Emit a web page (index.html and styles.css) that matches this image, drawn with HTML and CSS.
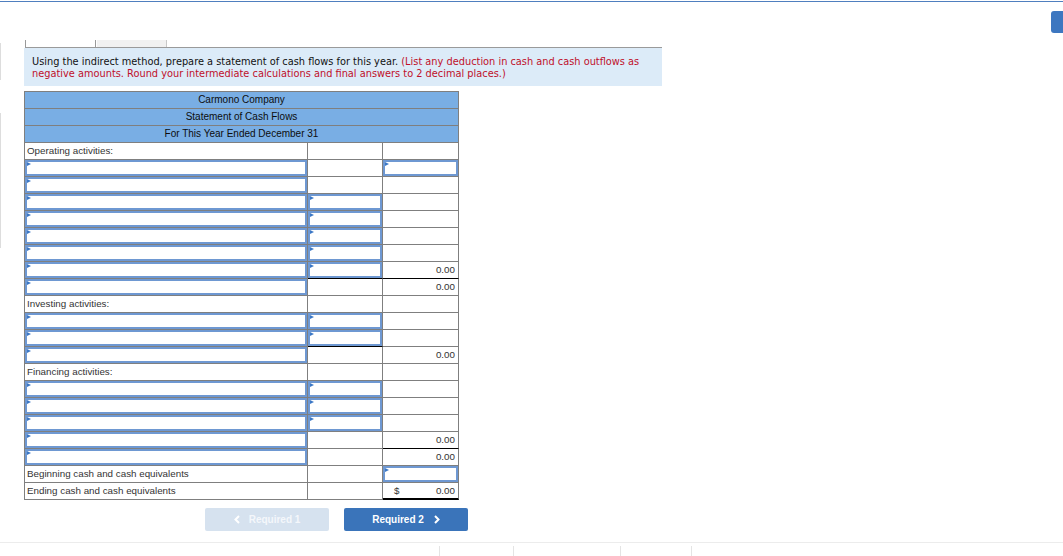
FILE: index.html
```html
<!DOCTYPE html>
<html lang="en">
<head>
<meta charset="utf-8">
<title>Statement of Cash Flows</title>
<link rel="stylesheet" href="styles.css">
</head>
<body>
<div class="topbar"></div>
<div class="side-tab"></div>
<div class="edge edge-a"></div>
<div class="edge edge-b"></div>
<main class="content">
  <div class="tabs"><div class="tab tab-1"></div><div class="tab tab-2"></div></div>
  <div class="instr">Using the indirect method, prepare a statement of cash flows for this year. <span class="red">(List any deduction in cash and cash outflows as<br>negative amounts. Round your intermediate calculations and final answers to 2 decimal places.)</span></div>

  <div class="stmt">
    <div class="cell head">Carmono Company</div>
    <div class="cell head">Statement of Cash Flows</div>
    <div class="cell head">For This Year Ended December 31</div>

    <div class="cell lbl">Operating activities:</div><div class="cell"></div><div class="cell"></div>
    <div class="cell"><div class="inp"></div></div><div class="cell"></div><div class="cell"><div class="inp"></div></div>
    <div class="cell"><div class="inp"></div></div><div class="cell"></div><div class="cell"></div>
    <div class="cell"><div class="inp"></div></div><div class="cell"><div class="inp"></div></div><div class="cell"></div>
    <div class="cell"><div class="inp"></div></div><div class="cell"><div class="inp"></div></div><div class="cell"></div>
    <div class="cell"><div class="inp"></div></div><div class="cell"><div class="inp"></div></div><div class="cell"></div>
    <div class="cell"><div class="inp"></div></div><div class="cell"><div class="inp"></div></div><div class="cell"></div>
    <div class="cell"><div class="inp"></div></div><div class="cell under"><div class="inp"></div></div><div class="cell num under">0.00</div>
    <div class="cell"><div class="inp"></div></div><div class="cell"></div><div class="cell num">0.00</div>

    <div class="cell lbl">Investing activities:</div><div class="cell"></div><div class="cell"></div>
    <div class="cell"><div class="inp"></div></div><div class="cell"><div class="inp"></div></div><div class="cell"></div>
    <div class="cell"><div class="inp"></div></div><div class="cell under"><div class="inp"></div></div><div class="cell"></div>
    <div class="cell"><div class="inp"></div></div><div class="cell"></div><div class="cell num">0.00</div>

    <div class="cell lbl">Financing activities:</div><div class="cell"></div><div class="cell"></div>
    <div class="cell"><div class="inp"></div></div><div class="cell"><div class="inp"></div></div><div class="cell"></div>
    <div class="cell"><div class="inp"></div></div><div class="cell"><div class="inp"></div></div><div class="cell"></div>
    <div class="cell"><div class="inp"></div></div><div class="cell"><div class="inp"></div></div><div class="cell"></div>
    <div class="cell"><div class="inp"></div></div><div class="cell"></div><div class="cell num under">0.00</div>
    <div class="cell"><div class="inp"></div></div><div class="cell"></div><div class="cell num">0.00</div>

    <div class="cell lbl">Beginning cash and cash equivalents</div><div class="cell"></div><div class="cell"><div class="inp"></div></div>
    <div class="cell lbl">Ending cash and cash equivalents</div><div class="cell"></div><div class="cell num total"><span class="cur">$</span>0.00</div>
  </div>

  <div class="nav">
    <div class="btn btn-off"><svg class="chev" width="6" height="9" viewBox="0 0 6 9"><polyline points="5,1 1.5,4.5 5,8" fill="none" stroke="#ffffff" stroke-width="2"/></svg><span>Required 1</span></div>
    <div class="btn btn-on"><span>Required 2</span><svg class="chev" width="6" height="9" viewBox="0 0 6 9"><polyline points="1,1 4.5,4.5 1,8" fill="none" stroke="#ffffff" stroke-width="2"/></svg></div>
  </div>
</main>
<footer class="footer">
  <div class="fcell f1"></div><div class="fcell f2"></div><div class="fcell f3"></div><div class="fcell f4"></div>
</footer>
</body>
</html>
```

FILE: styles.css
```css
html, body {
  margin: 0;
  padding: 0;
  background: #ffffff;
  overflow: hidden;
}
body {
  position: relative;
  width: 1063px;
  height: 556px;
  font-family: "Liberation Sans", Arial, sans-serif;
}
.topbar {
  height: 1px;
  margin-top: 1px;
  background: #4f7fbf;
}
.side-tab {
  position: absolute;
  right: 0;
  top: 11px;
  width: 12px;
  height: 22px;
  background: #3d77c0;
  border-radius: 3px 0 0 3px;
}
.edge {
  position: absolute;
  left: 0;
  width: 1px;
  background: #dddddd;
}
.edge-a { top: 43px; height: 37px; }
.edge-b { top: 113px; height: 135px; }

.content {
  margin-left: 24px;
  padding-top: 38px;
}
.tabs {
  display: flex;
  width: 637px;
  height: 7px;
  margin-left: 1px;
  border-bottom: 1px solid #9a9a9a;
}
.tab { height: 7px; box-sizing: border-box; }
.tab-1 { width: 70px; border-left: 1px solid #999999; }
.tab-2 {
  width: 72px;
  border-left: 1px solid #999999;
  border-right: 1px solid #c8c8c8;
  background: #f1f1f1;
  box-shadow: inset 1px 0 0 #ffffff;
}
.instr {
  width: 638px;
  height: 38px;
  box-sizing: border-box;
  padding: 8px 8px 0 8px;
  background: #dcebf8;
  font-family: "DejaVu Sans", Verdana, sans-serif;
  font-size: 9.8px;
  line-height: 12px;
  color: #111111;
  white-space: nowrap;
}
.red { color: #bf0f2a; }

.stmt {
  display: grid;
  grid-template-columns: 283px 75px 76px;
  grid-auto-rows: 17px;
  width: max-content;
  margin-top: 5px;
  border-left: 1px solid #7f7f7f;
  border-top: 1px solid #7f7f7f;
  font-size: 9.8px;
  color: #333333;
}
.cell {
  box-sizing: border-box;
  border-right: 1px solid #7f7f7f;
  border-bottom: 1px solid #7f7f7f;
  line-height: 16px;
  overflow: hidden;
}
.head {
  grid-column: 1 / span 3;
  background: #79aee4;
  text-align: center;
  color: #0d0d0d;
  font-size: 10px;
}
.lbl { padding-left: 2px; }
.num {
  text-align: right;
  padding-right: 3px;
}
.under { border-bottom-color: #000000; }
.total {
  border-bottom: 2px solid #000000;
  line-height: 15px;
}
.cur {
  float: left;
  margin-left: 11px;
}
.inp {
  position: relative;
  box-sizing: border-box;
  height: 16px;
  border: 2px solid #6e98d2;
  background: #ffffff;
}
.inp::before {
  content: "";
  position: absolute;
  left: 0;
  top: 0;
  border-left: 4px solid #3c78c6;
  border-top: 2.5px solid transparent;
  border-bottom: 2.5px solid transparent;
}

.nav {
  display: flex;
  gap: 15px;
  margin-top: 8px;
  margin-left: 181px;
}
.btn {
  width: 124px;
  height: 23px;
  border-radius: 2px;
  display: flex;
  align-items: center;
  justify-content: center;
  gap: 9px;
  font-size: 10px;
  font-weight: bold;
  color: #ffffff;
}
.btn-off { background: #d6e2ef; color: #f4f7fb; }
.btn-on { background: #3a74ba; gap: 10px; }
.chev { display: block; }

.footer {
  display: flex;
  margin-top: 11px;
  padding-top: 3px;
  border-top: 1px solid #ececec;
}
.fcell {
  box-sizing: border-box;
  height: 11px;
  border-right: 1px solid #e4e4e4;
}
.f1 { width: 440px; }
.f2 { width: 74px; }
.f3 { width: 107px; }
.f4 { width: 71px; }
```
